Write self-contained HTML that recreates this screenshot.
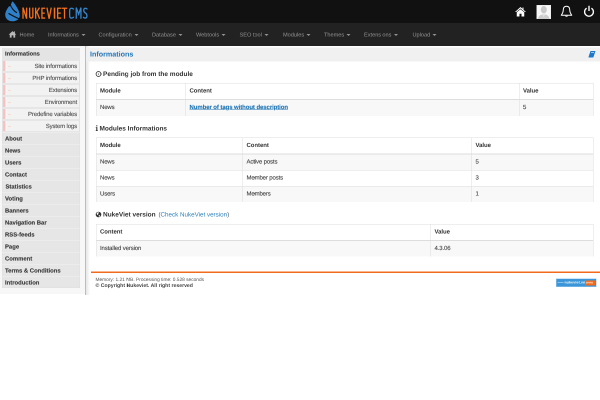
<!DOCTYPE html>
<html><head><meta charset="utf-8">
<style>
html,body{margin:0;padding:0;width:600px;height:400px;overflow:hidden;background:#fff;}
#s{will-change:transform;text-rendering:geometricPrecision;position:absolute;left:0;top:0;width:1200px;height:800px;transform:scale(0.5);transform-origin:0 0;font-family:"Liberation Sans",sans-serif;color:#333;}
.a{position:absolute;}
#hdr{left:0;top:0;width:1200px;height:92px;background:#111;}
#nav{left:0;top:46px;width:1200px;height:46px;background:#222;}
.ni{position:absolute;top:0;height:46px;line-height:49px;font-size:11.2px;color:#939393;white-space:nowrap;}
.caret{display:inline-block;width:0;height:0;border-top:4px solid #939393;border-left:4px solid transparent;border-right:4px solid transparent;vertical-align:middle;margin-left:5px;margin-top:-1px;}
#lc{left:0;top:92px;width:170px;height:496px;background:#f7f7f7;}
#lcl{left:170px;top:92px;width:2px;height:497px;background:#bdbdbd;}
#lcs{left:172px;top:92px;width:8px;height:497px;background:linear-gradient(to right,#e6e6e6,#fff);}
#sb{left:4px;top:96px;width:156px;height:480px;background:#e6e6e6;box-shadow:inset 0 0 0 1px #dedede;}
.sh{position:absolute;left:0;width:156px;height:24.5px;top:0;background:#e4e4e4;font-weight:bold;font-size:11.5px;line-height:25px;text-indent:6px;color:#3a3a3a;-webkit-text-stroke:0.25px;}
.si{position:absolute;left:0;width:156px;height:24px;}
.si .pk{position:absolute;left:2px;top:1px;width:4.5px;height:20px;background:#f8c2c2;}
.si .bg{position:absolute;left:6.5px;top:1px;width:147.5px;height:20px;background:#f2f2f2;border-left:2.5px solid #fafafa;box-sizing:border-box;}
.si .tx{position:absolute;right:6px;top:0;height:22px;line-height:22px;font-size:12px;letter-spacing:-0.25px;color:#4a4a4a;-webkit-text-stroke:0.15px;}
.si .ds{position:absolute;left:12px;top:10.5px;width:6px;height:1px;background:#f8c8a4;}
.mi{position:absolute;left:0;width:156px;height:24px;border-top:1px solid #f2f2f2;box-sizing:border-box;font-weight:bold;font-size:11.8px;line-height:22.5px;text-indent:6px;color:#3a3a3a;-webkit-text-stroke:0.25px;}
#ch{left:172px;top:95px;width:1028px;height:28px;background:#f0f0f0;}
#ch .t{position:absolute;left:8px;top:0;line-height:28px;font-size:14.3px;font-weight:bold;color:#1f74b8;}
.h{position:absolute;left:191px;font-size:13px;font-weight:bold;color:#333;white-space:nowrap;line-height:16px;}
.tb{position:absolute;left:192px;width:995px;border:1px solid #dddddd;box-sizing:border-box;}
.tr{position:relative;height:31.8px;border-top:1px solid #dddddd;box-sizing:border-box;font-size:12px;letter-spacing:-0.25px;-webkit-text-stroke:0.2px;}
.tr.hd{border-top:none;height:32px;font-weight:bold;font-size:12px;letter-spacing:-0.1px;-webkit-text-stroke:0;color:#333;background:#fff;}
.tr.od{background:#f8f8f8;}
.c{position:absolute;top:0;height:100%;line-height:29.5px;text-indent:7px;white-space:nowrap;}
.c.b{border-left:1px solid #dddddd;}
.tr .c{color:#444;}
.tr.hd .c{color:#333;}
.hb{border-bottom:2px solid #dddddd;}
#ft{left:182px;top:543px;width:1018px;height:3px;background:#f26b1d;}
.fx{position:absolute;left:191px;font-size:10px;color:#555;white-space:nowrap;}
</style></head>
<body><div id="s">
<div id="hdr" class="a">
  <svg class="a" style="left:0;top:0" width="48" height="46" viewBox="0 0 24 23">
    <path d="M12.6 1.2 C14.5 3.5 19.8 10 19.8 15.5 C19.8 19.5 16 21.3 12.2 21.3 C8 21.3 5.2 18.5 5.2 14.8 C5.2 11.5 7.5 8.5 8.8 6.5 L10.6 6 C10.8 4.5 11.5 2.5 12.6 1.2Z" fill="#2f80c8"/>
    <path d="M10.2 4.6 C11.5 8 13.5 11 17 12.8" stroke="#111" stroke-width="1.1" fill="none"/>
    <path d="M8.6 13.4 C11 15 14 16.6 19.5 19" stroke="#111" stroke-width="1.2" fill="none"/>
  </svg>
  <svg class="a" style="left:0;top:0" width="200" height="46" viewBox="0 0 100 23">
    <g fill="none" stroke="#f4721c" stroke-width="1.3" stroke-linejoin="miter">
      <path d="M23 18.7 V7.6 L26.6 18.7 V7.6"/>
      <path d="M29.65 7.6 V16.3 Q29.65 18.05 31.25 18.05 Q32.85 18.05 32.85 16.3 V7.6"/>
      <path d="M35.65 7.6 V18.7 M39.5 7.6 L35.65 13.6 M36.9 12 L39.6 18.7"/>
      <path d="M45.2 8.25 H41.95 V18.05 H45.2 M41.95 13.1 H44.8"/>
      <path d="M46.95 7.6 L49.1 18.7 L51.25 7.6"/>
      <path d="M54.5 7.6 V18.7" stroke-width="1.5"/>
      <path d="M61.2 8.25 H57.65 V18.05 H61.2 M57.65 13.1 H60.8"/>
      <path d="M61.8 8.25 H67.2 M64.5 8.25 V18.7"/>
    </g>
    <g fill="none" stroke="#3686cd" stroke-width="1.3">
      <path d="M73.6 9.6 Q73.4 8.25 71.4 8.25 Q69.65 8.25 69.65 10.6 V15.7 Q69.65 18.05 71.4 18.05 Q73.4 18.05 73.6 16.7"/>
      <path d="M76.25 18.7 V7.6 L78.6 14.2 L80.95 7.6 V18.7"/>
      <path d="M87.2 9.4 Q86.9 8.25 85.35 8.25 Q83.75 8.25 83.75 10.3 Q83.75 12.2 85.35 13 Q86.95 13.8 86.95 15.9 Q86.95 18.05 85.3 18.05 Q83.6 18.05 83.3 16.8"/>
    </g>
  </svg>
  <!-- home -->
  <svg class="a" style="left:1029px;top:13px" width="24" height="22" viewBox="0 0 24 22">
    <path d="M12 1 L1 11 L3.5 11 L12 4 L20.5 11 L23 11 L18 6.5 V2 H16 V4.8 Z" fill="#fff"/>
    <path d="M4.5 11.5 L12 5.5 L19.5 11.5 V20 H14 V14.5 H10 V20 H4.5Z" fill="#fff"/>
  </svg>
  <!-- avatar -->
  <div class="a" style="left:1073px;top:10px;width:29px;height:28px;background:#f7f7f7;overflow:hidden;box-shadow:inset 0 0 0 1px #e6e6e6">
    <svg width="29" height="28" viewBox="0 0 29 28"><ellipse cx="14.6" cy="9.5" rx="6" ry="7.6" fill="#c9c9c9"/><path d="M3 28 C3.5 22 8 19 14.5 18.5 C21 19 25.5 22 26 28Z" fill="#cdcdcd"/><path d="M12 19 L14.5 25 L17 19Z" fill="#e2e2e2"/></svg>
  </div>
  <!-- bell -->
  <svg class="a" style="left:1120px;top:10px" width="26" height="26" viewBox="0 0 26 26">
    <path d="M13 2.5 C8 2.5 6.5 6.5 6.5 10 C6.5 15 5 17 2.5 20.5 H23.5 C21 17 19.5 15 19.5 10 C19.5 6.5 18 2.5 13 2.5Z" fill="none" stroke="#fff" stroke-width="2" stroke-linejoin="round"/>
    <path d="M10 21.5 C10.5 24 15.5 24 16 21.5Z" fill="#fff"/>
  </svg>
  <!-- power -->
  <svg class="a" style="left:1166px;top:10px" width="24" height="25" viewBox="0 0 24 25">
    <path d="M7.2 6.3 A8.8 8.8 0 1 0 16.8 6.3" fill="none" stroke="#fff" stroke-width="2.7"/>
    <line x1="12" y1="1.5" x2="12" y2="12" stroke="#fff" stroke-width="2.7"/>
  </svg>
</div>
<div id="nav" class="a">
  <div class="ni" style="left:18px"><svg style="vertical-align:middle;margin-top:-3px;margin-left:-1px" width="16" height="15" viewBox="0 0 14 12"><path d="M7 0.5 L0.3 6.6 H2.3 V11.8 H5.5 V8 H8.5 V11.8 H11.7 V6.6 H13.7 L11.2 4.3 V1 H9.5 V2.8Z" fill="#b8b8b8"/></svg><span style="position:absolute;left:21px">Home</span></div>
  <div class="ni" style="left:96px">Informations<span class="caret"></span></div>
  <div class="ni" style="left:197px">Configuration<span class="caret"></span></div>
  <div class="ni" style="left:304px">Database<span class="caret"></span></div>
  <div class="ni" style="left:392px">Webtools<span class="caret"></span></div>
  <div class="ni" style="left:479px">SEO tool<span class="caret"></span></div>
  <div class="ni" style="left:566px">Modules<span class="caret"></span></div>
  <div class="ni" style="left:648px">Themes<span class="caret"></span></div>
  <div class="ni" style="left:728px">Extensions<span class="caret"></span></div>
  <div class="ni" style="left:825px">Upload<span class="caret"></span></div>
</div>

<div id="lc" class="a"></div>
<div id="lcl" class="a"></div>
<div id="lcs" class="a"></div>
<div id="sb" class="a">
  <div class="sh">Informations</div>
  <div class="si" style="top:25px"><div class="pk"></div><div class="bg"></div><div class="ds"></div><div class="tx">Site informations</div></div>
  <div class="si" style="top:49px"><div class="pk"></div><div class="bg"></div><div class="ds"></div><div class="tx">PHP informations</div></div>
  <div class="si" style="top:73px"><div class="pk"></div><div class="bg"></div><div class="ds"></div><div class="tx">Extensions</div></div>
  <div class="si" style="top:97px"><div class="pk"></div><div class="bg"></div><div class="ds"></div><div class="tx">Environment</div></div>
  <div class="si" style="top:121px"><div class="pk"></div><div class="bg"></div><div class="ds"></div><div class="tx">Predefine variables</div></div>
  <div class="si" style="top:145px"><div class="pk"></div><div class="bg"></div><div class="ds"></div><div class="tx">System logs</div></div>
  <div class="mi" style="top:169px">About</div>
  <div class="mi" style="top:193px">News</div>
  <div class="mi" style="top:217px">Users</div>
  <div class="mi" style="top:241px">Contact</div>
  <div class="mi" style="top:265px;text-indent:7px">Statistics</div>
  <div class="mi" style="top:289px">Voting</div>
  <div class="mi" style="top:313px">Banners</div>
  <div class="mi" style="top:337px">Navigation Bar</div>
  <div class="mi" style="top:361px">RSS-feeds</div>
  <div class="mi" style="top:385px">Page</div>
  <div class="mi" style="top:409px">Comment</div>
  <div class="mi" style="top:433px">Terms &amp; Conditions</div>
  <div class="mi" style="top:457px">Introduction</div>
</div>

<div id="ch" class="a"><div class="t">Informations</div>
  <svg class="a" style="left:1004px;top:6px" width="16" height="15" viewBox="0 0 16 15"><path d="M5 1 H15 L11 13 H1Z" fill="#1f78c8"/><path d="M6.5 3 H12.5 L11.8 5 H5.8Z" fill="#9cc6ec"/><path d="M1 13 H11 L10.5 14.5 H1.5Z" fill="#5fa3e0"/></svg>
</div>

<!-- section 1 -->
<div class="h" style="top:139.5px"><svg style="vertical-align:-2px;margin-right:3px" width="12" height="12" viewBox="0 0 12 12"><circle cx="6" cy="6" r="4.8" fill="none" stroke="#333" stroke-width="1.7"/><circle cx="6" cy="6.2" r="1.1" fill="#333"/></svg>Pending job from the module</div>
<div class="tb" style="top:166px;height:65px">
  <div class="tr hd hb" style="height:32.5px"><div class="c" style="left:0;width:178px">Module</div><div class="c b" style="left:178px;width:667px">Content</div><div class="c b" style="left:845px;width:150px">Value</div></div>
  <div class="tr od" style="border-top:none"><div class="c" style="left:0;width:178px">News</div><div class="c b" style="left:178px;width:667px"><span style="color:#1e74b5;font-weight:bold;text-decoration:underline;letter-spacing:-0.15px">Number of tags without description</span></div><div class="c b" style="left:845px;width:150px">5</div></div>
</div>

<!-- section 2 -->
<div class="h" style="top:248.5px"><svg style="vertical-align:-1px;margin-right:3px" width="5" height="12" viewBox="0 0 5 12"><rect x="1.5" y="0.5" width="2.2" height="2.2" fill="#333"/><path d="M0.5 4.2 H3.7 V10.6 H4.6 V12 H0.5 V10.6 H1.5 V5.6 H0.5Z" fill="#333"/></svg>Modules Informations</div>
<div class="tb" style="top:275px;height:129px">
  <div class="tr hd hb" style="height:32.5px"><div class="c" style="left:0;width:292px">Module</div><div class="c b" style="left:292px;width:459px">Content</div><div class="c b" style="left:750px;width:245px">Value</div></div>
  <div class="tr od" style="border-top:none"><div class="c" style="left:0;width:292px">News</div><div class="c b" style="left:292px;width:459px">Active posts</div><div class="c b" style="left:750px;width:245px">5</div></div>
  <div class="tr"><div class="c" style="left:0;width:292px">News</div><div class="c b" style="left:292px;width:459px">Member posts</div><div class="c b" style="left:750px;width:245px">3</div></div>
  <div class="tr od"><div class="c" style="left:0;width:292px">Users</div><div class="c b" style="left:292px;width:459px">Members</div><div class="c b" style="left:750px;width:245px">1</div></div>
</div>

<!-- section 3 -->
<div class="h" style="top:421px"><svg style="vertical-align:-2px;margin-right:3px" width="12" height="12" viewBox="0 0 12 12"><circle cx="6" cy="6" r="5.6" fill="#333"/><path d="M2.2 4.2 C3 2.2 5 1.3 6.5 1.6 L6.8 3.5 L5 4.5 L5.5 6.5 L3.5 6.8Z" fill="#fff"/><path d="M6.5 7 L9 7.5 L8.5 10 L6.8 10.8Z" fill="#fff"/></svg>NukeViet version <span style="font-weight:normal;color:#555;font-size:12.5px;margin-left:2px">(<span style="color:#2b7fbb">Check NukeViet version</span>)</span></div>
<div class="tb" style="top:448px;height:65px">
  <div class="tr hd hb" style="height:32.5px"><div class="c" style="left:0;width:668px">Content</div><div class="c b" style="left:668px;width:327px">Value</div></div>
  <div class="tr od" style="border-top:none"><div class="c" style="left:0;width:668px">Installed version</div><div class="c b" style="left:668px;width:327px">4.3.06</div></div>
</div>

<div id="ft" class="a"></div>
<div class="fx" style="top:554px;font-size:9.6px">Memory: 1.21 MB. Processing time: 0.528 seconds</div>
<div class="fx" style="top:566px;font-size:10.3px;font-weight:bold;color:#444">© Copyright Nukeviet. All right reserved</div>
<div class="a" style="left:1113px;top:558px;width:79px;height:15px;background:#3a96d8;box-shadow:0 0 0 1px #9ccbee">
  <div class="a" style="left:2px;top:7px;width:12px;height:1px;background:#d8ecfa"></div>
  <div class="a" style="left:16px;top:1px;height:13px;line-height:13px;font-size:7px;color:#fff;font-weight:bold;white-space:nowrap;letter-spacing:0.3px">nukeviet.vn</div>
  <div class="a" style="left:58px;top:3px;width:19px;height:10px;background:#f26b1d"><div class="a" style="left:1px;top:0;line-height:10px;font-size:6px;color:#fde3d0;font-weight:bold">www</div></div>
</div>
</div></body></html>
